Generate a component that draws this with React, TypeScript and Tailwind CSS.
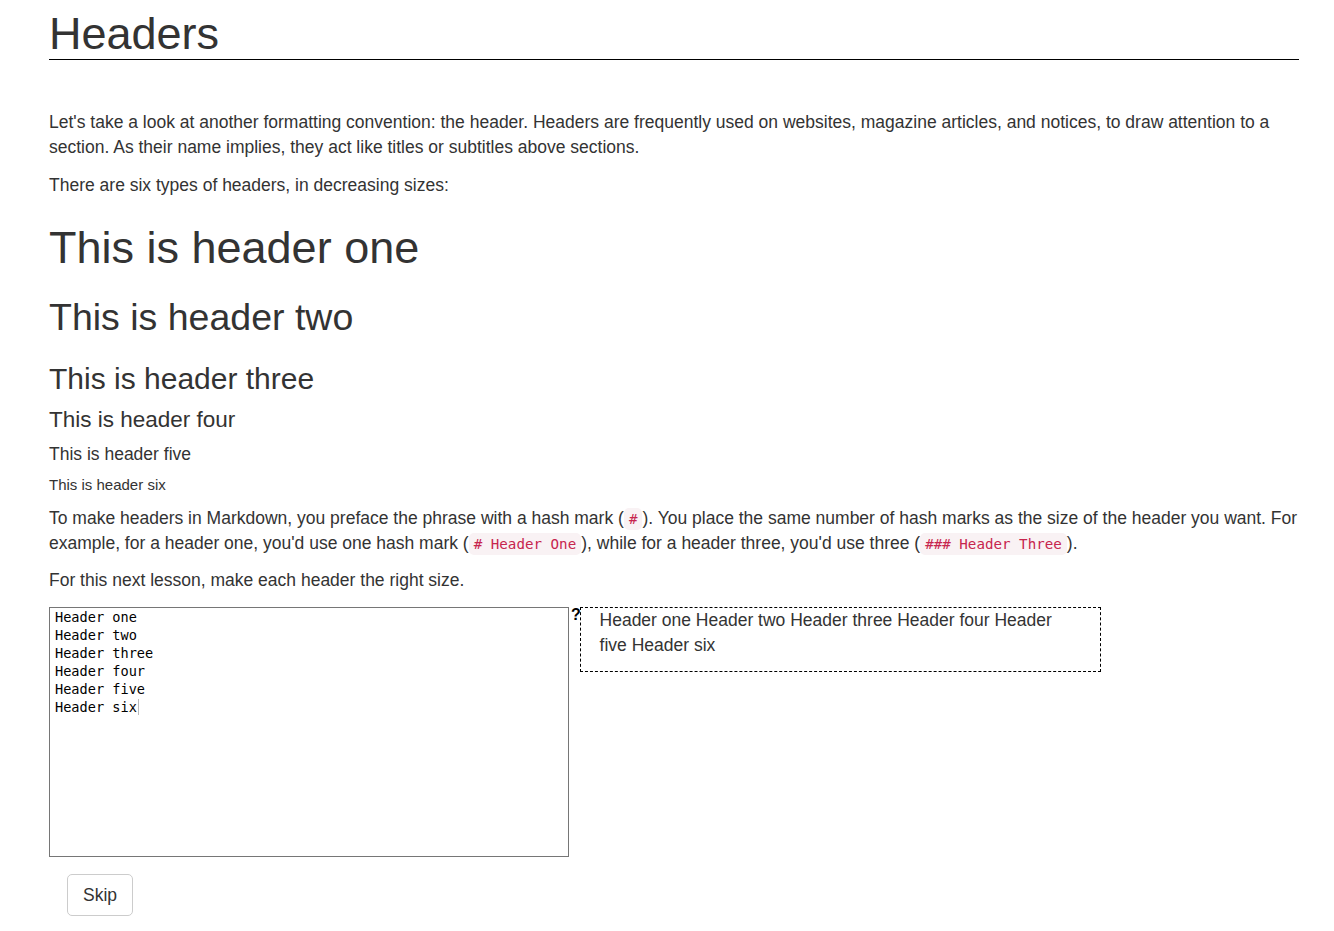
const body = "font-['Liberation_Sans',Arial,sans-serif]";
const mono = "font-['DejaVu_Sans_Mono','Liberation_Mono',monospace]";

function Code({ children }: { children: string }) {
  return (
    <code
      className={`${mono} rounded-[5px] bg-[#f9f2f4] px-[5px] py-[3px] text-[14.2px] leading-none text-[#c7254e]`}
    >
      {children}
    </code>
  );
}

const lines = ["Header one", "Header two", "Header three", "Header four", "Header five", "Header six"];

export default function App() {
  return (
    <div className={`${body} min-h-[931px] bg-white text-[17.5px] leading-[25px] text-[#333]`}>
      <div className="ml-[49px] w-[1250px] pt-[9px]">
        <h1 className="border-b border-black text-[45px] leading-[49.5px] font-normal">Headers</h1>

        <p className="mt-[50px] mb-[13px]">
          Let's take a look at another formatting convention: the header. Headers are frequently used on
          websites, magazine articles, and notices, to draw attention to a section. As their name implies,
          they act like titles or subtitles above sections.
        </p>
        <p className="mb-[12.5px]">There are six types of headers, in decreasing sizes:</p>

        <h1 className="mt-[25px] mb-[12.5px] text-[45px] leading-[49.5px] font-normal">This is header one</h1>
        <h2 className="mt-[25px] mb-[12.5px] text-[37.5px] leading-[41.25px] font-normal">This is header two</h2>
        <h3 className="mt-[24px] mb-[12.5px] text-[30px] leading-[33px] font-normal">This is header three</h3>
        <h4 className="mt-[12.5px] mb-[12.5px] text-[22.5px] leading-[24.75px] font-normal">This is header four</h4>
        <h5 className="mt-[12.5px] mb-[12.5px] text-[17.5px] leading-[19.25px] font-normal">This is header five</h5>
        <h6 className="mt-[12.5px] mb-[12.5px] text-[15px] leading-[16.5px] font-normal">This is header six</h6>

        <p className="mb-[12.5px]">
          To make headers in Markdown, you preface the phrase with a hash mark (<Code>#</Code>). You place the
          same number of hash marks as the size of the header you want. For example, for a header one, you'd
          use one hash mark (<Code># Header One</Code>), while for a header three, you'd use three (
          <Code>### Header Three</Code>).
        </p>
        <p className="mb-[14px]">For this next lesson, make each header the right size.</p>

        <div className="flex items-start">
          <div
            className={`${mono} h-[250px] w-[520px] border border-[#767676] px-[5px] text-[13.6px] leading-[18px] text-black`}
          >
            {lines.map((l, i) => (
              <div key={l} className="whitespace-pre">
                {l}
                {i === lines.length - 1 && (
                  <span className="ml-[1px] inline-block h-[16px] w-[1px] bg-[#bbb] align-[-3px]" />
                )}
              </div>
            ))}
          </div>
          <span className="ml-[2px] text-[16px] leading-[16px] font-bold text-black">?</span>
          <div className="-ml-[1px] w-[521px] border border-dashed border-black px-[18.75px]">
            <p className="mb-[12.5px]">
              Header one Header two Header three Header four Header five Header six
            </p>
          </div>
        </div>

        <button className="mt-[17px] ml-[18px] rounded-[5px] border border-[#ccc] bg-white px-[15px] py-[7.5px] text-[17.5px] leading-[25px] text-[#333]">
          Skip
        </button>
      </div>
    </div>
  );
}
